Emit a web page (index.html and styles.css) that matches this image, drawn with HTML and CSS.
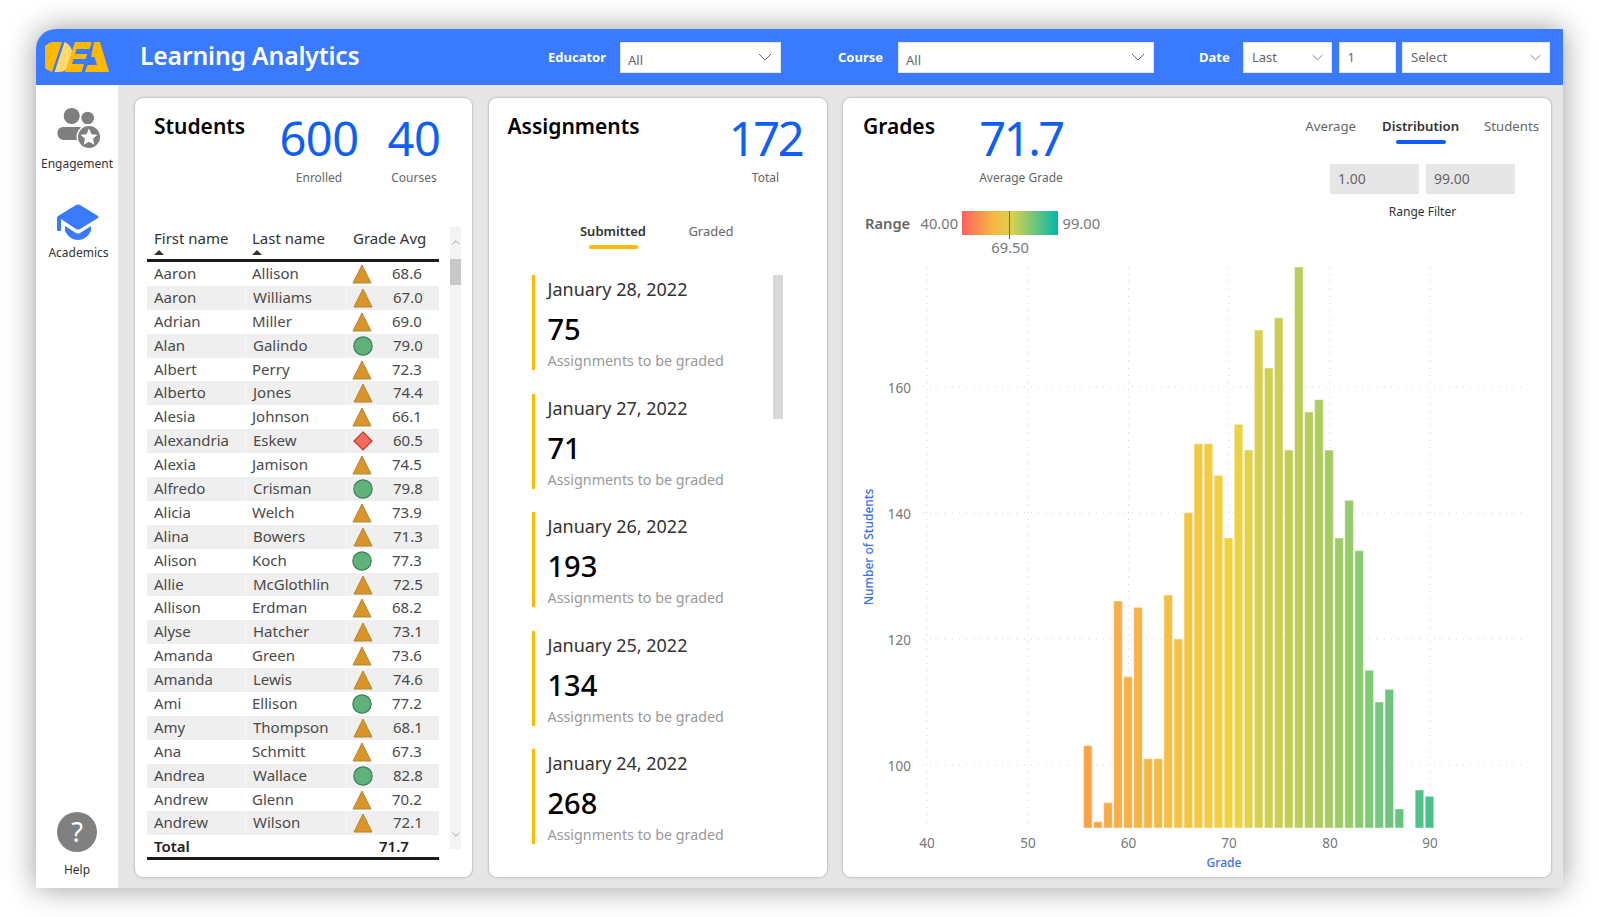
FILE: index.html
```html
<!DOCTYPE html>
<html lang="en">
<head>
    <meta charset="utf-8">
    <title>Learning Analytics</title>
    <link rel="stylesheet" href="styles.css">
</head>
<body>
<svg class="defs">
    <symbol id="tri" viewBox="0 0 20 20"><path d="M10 1 L19 19 H1 Z" fill="#d9952a" stroke="#b5822f" stroke-width="1"/></symbol>
    <symbol id="dot" viewBox="0 0 20 20"><circle cx="10" cy="10" r="9.2" fill="#5fb27a" stroke="#3f7f58" stroke-width="1.2"/></symbol>
    <symbol id="dia" viewBox="0 0 20 20"><path d="M10 1 L19 10 L10 19 L1 10 Z" fill="#f8695c" stroke="#c8352b" stroke-width="1.2"/></symbol>
    <symbol id="chev" viewBox="0 0 14 8"><path d="M1 1 L7 7 L13 1" fill="none" stroke="#666" stroke-width="1"/></symbol>
</svg>

<div class="app">
    <header class="topbar">
        <svg class="logo" viewBox="0 0 64 30">
            <path d="M15 0 H17 L7 30 A15 15 0 0 1 15 0 Z" fill="#ffb900"/>
            <path d="M19.5 0 C25 2 28 8 28 15 C28 23 22 30 14 30 H9.5 Z" fill="#ffd96b"/>
            <path d="M30 0 H47 L44.5 7 H31.5 L30 12 H42 L40.5 17 H28.5 L27 22 H39 L36.5 30 H20 Z" fill="#ffb900"/>
            <path d="M49 0 H55 L64 30 H40 L42.5 23 H52 L49.5 15 L46 15 Z" fill="#ffb900"/>
        </svg>
        <h1 class="app-title">Learning Analytics</h1>
        <div class="filters">
            <span class="f-label f-educator">Educator</span>
            <div class="dd dd-educator"><span>All</span><svg class="chev"><use href="#chev"/></svg></div>
            <span class="f-label f-course">Course</span>
            <div class="dd dd-course"><span>All</span><svg class="chev"><use href="#chev"/></svg></div>
            <span class="f-label f-date">Date</span>
            <div class="dd dd-last"><span>Last</span><svg class="chev small"><use href="#chev"/></svg></div>
            <div class="dd dd-num"><span>1</span></div>
            <div class="dd dd-select"><span>Select</span><svg class="chev small"><use href="#chev"/></svg></div>
        </div>
    </header>

    <div class="body-wrap">
        <nav class="side">
            <a class="side-item engagement">
                <svg class="ico-eng" viewBox="0 0 46 42">
                    <circle cx="17.7" cy="8" r="8" fill="#7f7f7f"/>
                    <circle cx="33.7" cy="10" r="6.3" fill="#7f7f7f"/>
                    <path d="M3.5 25 C3.5 21 6 19 10 19 H24 C28 19 30 21 30 24 V32 H10 C6 32 3.5 29 3.5 25 Z" fill="#7f7f7f"/>
                    <path d="M30 18 H38 L37 19 C33 19 29 22 27 23 Z" fill="#7f7f7f"/>
                    <circle cx="35" cy="29" r="12.5" fill="#fff"/>
                    <circle cx="35" cy="29" r="11" fill="#7f7f7f"/>
                    <path d="M35 20.5 L37.5 26.2 L43.5 26.8 L39 30.8 L40.3 36.8 L35 33.7 L29.7 36.8 L31 30.8 L26.5 26.8 L32.5 26.2 Z" fill="#fff"/>
                </svg>
                <span>Engagement</span>
            </a>
            <a class="side-item academics">
                <svg class="ico-acad" viewBox="0 0 42 37">
                    <path d="M19 1 Q21 0 23 1 L41 12 Q42 13 41 14 L23 25 Q21 26 19 25 L4 15 V27 H1 Q0 27 0 26 V14 Q0 13 1 12 Z" fill="#3a7afe"/>
                    <path d="M8 22 L19 29 Q21 30 23 29 L34 22 V27 C31 33 26 36 21 36 C16 36 11 33 8 27 Z" fill="#3a7afe"/>
                </svg>
                <span>Academics</span>
            </a>
            <a class="side-item help">
                <span class="help-circle">?</span>
                <span>Help</span>
            </a>
        </nav>

        <main class="board">
            <section class="card">
                <div class="card-head">
                    <h2 class="card-title">Students</h2>
                    <div class="kpis">
                        <div class="kpi kpi-600"><div class="kpi-num">600</div><div class="kpi-label">Enrolled</div></div>
                        <div class="kpi kpi-40"><div class="kpi-num">40</div><div class="kpi-label">Courses</div></div>
                    </div>
                </div>
                <div class="table-wrap">
                    <div class="table">
                        <div class="thead">
                            <span class="sorted">First name</span>
                            <span class="sorted">Last name</span>
                            <span>Grade Avg</span>
                        </div>
                        <div class="rows">
                            <div class="row"><span>Aaron</span><span>Allison</span><span class="grade"><svg class="mark"><use href="#tri"/></svg>68.6</span></div>
                            <div class="row"><span>Aaron</span><span>Williams</span><span class="grade"><svg class="mark"><use href="#tri"/></svg>67.0</span></div>
                            <div class="row"><span>Adrian</span><span>Miller</span><span class="grade"><svg class="mark"><use href="#tri"/></svg>69.0</span></div>
                            <div class="row"><span>Alan</span><span>Galindo</span><span class="grade"><svg class="mark"><use href="#dot"/></svg>79.0</span></div>
                            <div class="row"><span>Albert</span><span>Perry</span><span class="grade"><svg class="mark"><use href="#tri"/></svg>72.3</span></div>
                            <div class="row"><span>Alberto</span><span>Jones</span><span class="grade"><svg class="mark"><use href="#tri"/></svg>74.4</span></div>
                            <div class="row"><span>Alesia</span><span>Johnson</span><span class="grade"><svg class="mark"><use href="#tri"/></svg>66.1</span></div>
                            <div class="row"><span>Alexandria</span><span>Eskew</span><span class="grade"><svg class="mark"><use href="#dia"/></svg>60.5</span></div>
                            <div class="row"><span>Alexia</span><span>Jamison</span><span class="grade"><svg class="mark"><use href="#tri"/></svg>74.5</span></div>
                            <div class="row"><span>Alfredo</span><span>Crisman</span><span class="grade"><svg class="mark"><use href="#dot"/></svg>79.8</span></div>
                            <div class="row"><span>Alicia</span><span>Welch</span><span class="grade"><svg class="mark"><use href="#tri"/></svg>73.9</span></div>
                            <div class="row"><span>Alina</span><span>Bowers</span><span class="grade"><svg class="mark"><use href="#tri"/></svg>71.3</span></div>
                            <div class="row"><span>Alison</span><span>Koch</span><span class="grade"><svg class="mark"><use href="#dot"/></svg>77.3</span></div>
                            <div class="row"><span>Allie</span><span>McGlothlin</span><span class="grade"><svg class="mark"><use href="#tri"/></svg>72.5</span></div>
                            <div class="row"><span>Allison</span><span>Erdman</span><span class="grade"><svg class="mark"><use href="#tri"/></svg>68.2</span></div>
                            <div class="row"><span>Alyse</span><span>Hatcher</span><span class="grade"><svg class="mark"><use href="#tri"/></svg>73.1</span></div>
                            <div class="row"><span>Amanda</span><span>Green</span><span class="grade"><svg class="mark"><use href="#tri"/></svg>73.6</span></div>
                            <div class="row"><span>Amanda</span><span>Lewis</span><span class="grade"><svg class="mark"><use href="#tri"/></svg>74.6</span></div>
                            <div class="row"><span>Ami</span><span>Ellison</span><span class="grade"><svg class="mark"><use href="#dot"/></svg>77.2</span></div>
                            <div class="row"><span>Amy</span><span>Thompson</span><span class="grade"><svg class="mark"><use href="#tri"/></svg>68.1</span></div>
                            <div class="row"><span>Ana</span><span>Schmitt</span><span class="grade"><svg class="mark"><use href="#tri"/></svg>67.3</span></div>
                            <div class="row"><span>Andrea</span><span>Wallace</span><span class="grade"><svg class="mark"><use href="#dot"/></svg>82.8</span></div>
                            <div class="row"><span>Andrew</span><span>Glenn</span><span class="grade"><svg class="mark"><use href="#tri"/></svg>70.2</span></div>
                            <div class="row"><span>Andrew</span><span>Wilson</span><span class="grade"><svg class="mark"><use href="#tri"/></svg>72.1</span></div>
                        </div>
                        <div class="tfoot"><span>Total</span><span></span><span class="total-val">71.7</span></div>
                    </div>
                    <div class="scrollbar">
                        <svg class="sb-arrow up"><use href="#chev"/></svg>
                        <div class="sb-thumb"></div>
                        <svg class="sb-arrow down"><use href="#chev"/></svg>
                    </div>
                </div>
            </section>

            <section class="card">
                <div class="card-head">
                    <h2 class="card-title">Assignments</h2>
                    <div class="kpis">
                        <div class="kpi kpi-172"><div class="kpi-num">172</div><div class="kpi-label">Total</div></div>
                    </div>
                </div>
                <div class="tabs-a">
                    <div class="tab-a active">Submitted<i></i></div>
                    <div class="tab-a">Graded</div>
                </div>
                <div class="assign-body">
                    <div class="assign-list">
                        <div class="assign"><div class="a-date">January 28, 2022</div><div class="a-num">75</div><div class="a-text">Assignments to be graded</div></div>
                        <div class="assign"><div class="a-date">January 27, 2022</div><div class="a-num">71</div><div class="a-text">Assignments to be graded</div></div>
                        <div class="assign"><div class="a-date">January 26, 2022</div><div class="a-num">193</div><div class="a-text">Assignments to be graded</div></div>
                        <div class="assign"><div class="a-date">January 25, 2022</div><div class="a-num">134</div><div class="a-text">Assignments to be graded</div></div>
                        <div class="assign"><div class="a-date">January 24, 2022</div><div class="a-num">268</div><div class="a-text">Assignments to be graded</div></div>
                    </div>
                    <div class="assign-thumb"></div>
                </div>
            </section>

            <section class="card">
                <div class="grades-top">
                    <div class="grades-left">
                        <div class="card-head">
                            <h2 class="card-title title-grades">Grades</h2>
                            <div class="kpi kpi-grade"><div class="kpi-num">71.7</div><div class="kpi-label">Average Grade</div></div>
                        </div>
                        <div class="range">
                            <span class="range-label">Range</span>
                            <span class="range-val">40.00</span>
                            <div class="range-bar"><i class="range-mark"></i><span class="range-now">69.50</span></div>
                            <span class="range-val">99.00</span>
                        </div>
                    </div>
                    <div class="grades-right">
                        <div class="tabs-g">
                            <div class="tab-g">Average</div>
                            <div class="tab-g active">Distribution<i></i></div>
                            <div class="tab-g">Students</div>
                        </div>
                        <div class="filter-inputs">
                            <div class="num-input">1.00</div>
                            <div class="num-input">99.00</div>
                        </div>
                        <div class="filter-label">Range Filter</div>
                    </div>
                </div>
                <svg class="chart" viewBox="843 256 708 621">
                    <g class="grid">
                        <path d="M927 267 V828 M1028 267 V828 M1128.5 267 V828 M1229 267 V828 M1330 267 V828 M1430 267 V828"/>
                        <path d="M923 387 H1522 M923 513 H1522 M923 639 H1522 M923 765 H1522"/>
                    </g>
                    <g class="bars">
                        <rect x="1083.5" y="745.7" width="8.6" height="82.3" fill="#fca34a"/>
                        <rect x="1093.55" y="821.7" width="8.6" height="6.3" fill="#fba749"/>
                        <rect x="1103.6" y="802.7" width="8.6" height="25.3" fill="#fbaa48"/>
                        <rect x="1113.65" y="601" width="8.6" height="227" fill="#faad46"/>
                        <rect x="1123.7" y="676.7" width="8.6" height="151.3" fill="#f9b045"/>
                        <rect x="1133.75" y="607.3" width="8.6" height="220.7" fill="#f8b345"/>
                        <rect x="1143.8" y="758.7" width="8.6" height="69.3" fill="#f8b744"/>
                        <rect x="1153.85" y="758.7" width="8.6" height="69.3" fill="#f7ba44"/>
                        <rect x="1163.9" y="595" width="8.6" height="233" fill="#f6be43"/>
                        <rect x="1173.95" y="639" width="8.6" height="189" fill="#f5c243"/>
                        <rect x="1184" y="512.7" width="8.6" height="315.3" fill="#f5c541"/>
                        <rect x="1194.05" y="443.7" width="8.6" height="384.3" fill="#f5c840"/>
                        <rect x="1204.1" y="443.7" width="8.6" height="384.3" fill="#f6cb40"/>
                        <rect x="1214.15" y="475.3" width="8.6" height="352.7" fill="#f5ce3f"/>
                        <rect x="1224.2" y="538" width="8.6" height="290" fill="#f2d13f"/>
                        <rect x="1234.25" y="424.3" width="8.6" height="403.7" fill="#ebd343"/>
                        <rect x="1244.3" y="450" width="8.6" height="378" fill="#e2d249"/>
                        <rect x="1254.35" y="330" width="8.6" height="498" fill="#d8d04f"/>
                        <rect x="1264.4" y="368" width="8.6" height="460" fill="#d1cf50"/>
                        <rect x="1274.45" y="317.7" width="8.6" height="510.3" fill="#cbce52"/>
                        <rect x="1284.5" y="450" width="8.6" height="378" fill="#c3cd55"/>
                        <rect x="1294.55" y="267" width="8.6" height="561" fill="#bccd57"/>
                        <rect x="1304.6" y="412" width="8.6" height="416" fill="#b5cc5b"/>
                        <rect x="1314.65" y="399.7" width="8.6" height="428.3" fill="#aecc5f"/>
                        <rect x="1324.7" y="450" width="8.6" height="378" fill="#a7cb62"/>
                        <rect x="1334.75" y="538" width="8.6" height="290" fill="#9fcb66"/>
                        <rect x="1344.8" y="500.3" width="8.6" height="327.7" fill="#95cb6b"/>
                        <rect x="1354.85" y="550.7" width="8.6" height="277.3" fill="#8acb70"/>
                        <rect x="1364.9" y="670.3" width="8.6" height="157.7" fill="#80c975"/>
                        <rect x="1374.95" y="702" width="8.6" height="126" fill="#77c87a"/>
                        <rect x="1385" y="689.3" width="8.6" height="138.7" fill="#6ec67c"/>
                        <rect x="1395.05" y="809" width="8.6" height="19" fill="#65c47f"/>
                        <rect x="1415.15" y="790" width="8.6" height="38" fill="#4fc386"/>
                        <rect x="1425.2" y="796.3" width="8.6" height="31.7" fill="#49c187"/>
                    </g>
                    <g class="tick y-tick">
                        <text x="911" y="393">160</text>
                        <text x="911" y="519">140</text>
                        <text x="911" y="645">120</text>
                        <text x="911" y="771">100</text>
                    </g>
                    <g class="tick x-tick">
                        <text x="927" y="848">40</text>
                        <text x="1028" y="848">50</text>
                        <text x="1128.5" y="848">60</text>
                        <text x="1229" y="848">70</text>
                        <text x="1330" y="848">80</text>
                        <text x="1430" y="848">90</text>
                    </g>
                    <text class="axis-title" x="1224" y="867">Grade</text>
                    <text class="axis-title" transform="translate(873 547) rotate(-90)">Number of Students</text>
                </svg>
            </section>
        </main>
    </div>
</div>
</body>
</html>
```

FILE: styles.css
```css
* {
    box-sizing: border-box;
}
html, body {
    margin: 0;
    height: 100%;
}
body {
    background: #fff;
    padding: 29px 0 0 36px;
    font-family: "Noto Sans", "Open Sans", sans-serif;
    color: #444;
    overflow: hidden;
}
h1, h2 {
    margin: 0;
}
.defs {
    display: none;
}

.app {
    width: 1527px;
    height: 859px;
    background: #e6e6e6;
    border-top-left-radius: 20px;
    box-shadow: 0 0 30px rgba(0, 0, 0, .4);
    display: flex;
    flex-direction: column;
}

/* top bar */
.topbar {
    height: 56px;
    flex: none;
    background: #3a7afe;
    border-top-left-radius: 20px;
    display: flex;
    align-items: center;
    padding: 0 13px 0 9px;
}
.logo {
    width: 64px;
    height: 30px;
    flex: none;
}
.app-title {
    margin-left: 31px;
    margin-top: -4px;
    color: #fff;
    font-size: 24.7px;
    font-weight: 600;
    letter-spacing: -.15px;
    white-space: nowrap;
}
.filters {
    margin-left: auto;
    display: flex;
    align-items: center;
}
.f-label {
    color: #fff;
    font-size: 13px;
    font-weight: 700;
    white-space: nowrap;
}
.f-educator { width: 72px; }
.f-course { width: 60px; margin-left: 57.5px; }
.f-date { width: 44px; margin-left: 45px; }
.dd {
    height: 31px;
    background: #fff;
    border: 1px solid #e4e4e4;
    display: flex;
    align-items: center;
    justify-content: space-between;
    padding: 0 8px;
    font-size: 13px;
    color: #666;
}
.dd-educator { width: 160.5px; padding-left: 7px; }
.dd-course { width: 256px; padding-left: 7px; }
.dd-educator span, .dd-course span { padding-top: 5px; }
.dd-last { width: 89px; }
.dd-num { width: 57px; margin-left: 6.5px; }
.dd-select { width: 148px; margin-left: 6.5px; }
.chev {
    width: 14px;
    height: 8px;
}
.chev.small {
    width: 11px;
    height: 7px;
}

/* layout under the bar */
.body-wrap {
    flex: 1;
    display: flex;
    min-height: 0;
}
.side {
    width: 82px;
    flex: none;
    background: #fff;
    display: flex;
    flex-direction: column;
    align-items: center;
    font-size: 12px;
    color: #333;
}
.side-item {
    display: flex;
    flex-direction: column;
    align-items: center;
}
.engagement {
    margin-top: 23px;
}
.ico-eng {
    width: 46px;
    height: 42px;
    margin-bottom: 5px;
    overflow: visible;
}
.academics {
    margin-top: 32px;
    margin-left: 3px;
}
.ico-acad {
    width: 42px;
    height: 37px;
    margin-bottom: 3px;
}
.help {
    margin-top: auto;
    margin-bottom: 10px;
}
.help-circle {
    width: 40px;
    height: 40px;
    border-radius: 50%;
    background: #808080;
    color: #fff;
    font-size: 27px;
    line-height: 40px;
    text-align: center;
    margin-bottom: 9px;
}

.board {
    flex: 1;
    display: grid;
    grid-template-columns: 337px 338px 708px;
    column-gap: 16.5px;
    padding: 13px 0 11px 17px;
}
.card {
    background: #fff;
    border-radius: 8px;
    box-shadow: 0 0 2px 1px rgba(0, 0, 0, .16);
    min-width: 0;
}

.card-head {
    display: flex;
    align-items: flex-start;
    padding-top: 14px;
}
.card-title {
    padding-left: 19px;
    color: #000;
    font-size: 21px;
    font-weight: 600;
    line-height: 28px;
    white-space: nowrap;
}
.kpis {
    margin-left: auto;
    display: flex;
    margin-top: 2px;
}
.kpi {
    text-align: center;
}
.kpi-num {
    color: #0f5ef7;
    font-size: 47px;
    line-height: 48px;
    letter-spacing: -.5px;
}
.kpi-label {
    margin-top: 7px;
    font-size: 12px;
    line-height: 18px;
    color: #666;
}
.kpi-600 { width: 90px; margin-right: 20px; }
.kpi-40 { width: 60px; margin-right: 28px; }
.kpi-172 { width: 80px; margin-right: 21px; }
.kpi-172 .kpi-num, .kpi-grade .kpi-num {
    letter-spacing: -2.4px;
}

/* students table */
.table-wrap {
    display: flex;
    margin: 40px 0 0 12px;
}
.table {
    width: 292px;
    font-size: 15px;
    color: #4a4a4a;
}
.thead, .row, .tfoot {
    display: grid;
    grid-template-columns: 98px 101px 93px;
    align-items: center;
}
.thead {
    height: 35px;
    border-bottom: 3px solid #1a1a1a;
    align-items: start;
    padding-top: 1px;
    color: #333;
    line-height: 20px;
}
.thead span {
    padding-left: 7px;
    position: relative;
}
.sorted::after {
    content: "";
    position: absolute;
    left: 7px;
    top: 22px;
    border-left: 5px solid transparent;
    border-right: 5px solid transparent;
    border-bottom: 5px solid #333;
}
.row {
    height: 23.9px;
}
.row span {
    height: 100%;
    padding-left: 7px;
    line-height: 23.9px;
}
.rows .row:nth-child(even) {
    background: #efefef;
}
.rows .row:nth-child(even) span + span {
    border-left: 1px solid #f6f6f6;
}
.row .grade {
    display: flex;
    align-items: center;
    padding-left: 6px;
}
.mark {
    width: 20px;
    height: 20px;
    margin-right: 20px;
    flex: none;
}
.tfoot {
    height: 25px;
    border-bottom: 3px solid #1a1a1a;
    color: #222;
    font-weight: 600;
    line-height: 22px;
}
.tfoot span {
    padding-left: 7px;
}
.tfoot .total-val {
    padding-left: 33px;
}
.scrollbar {
    width: 11px;
    height: 622px;
    margin-left: 11px;
    background: #f3f3f3;
    display: flex;
    flex-direction: column;
    align-items: center;
}
.sb-arrow {
    width: 8px;
    height: 5px;
    flex: none;
}
.sb-arrow.up {
    margin-top: 13px;
    transform: rotate(180deg);
}
.sb-thumb {
    width: 11px;
    height: 26px;
    margin-top: 14px;
    background: #c8c8c8;
}
.sb-arrow.down {
    margin-top: auto;
    margin-bottom: 12px;
}

/* assignments */
.tabs-a {
    display: flex;
    margin: 34px 0 0 75.5px;
    font-size: 13px;
    line-height: 20px;
    color: #666;
}
.tab-a {
    width: 98px;
    text-align: center;
}
.tab-a.active {
    color: #333;
    font-weight: 600;
}
.tab-a i {
    display: block;
    width: 49px;
    height: 4px;
    margin: 4px auto 0;
    background: #ffb900;
    border-radius: 2px;
}
.assign-body {
    display: flex;
    align-items: flex-start;
    margin-top: 26px;
    padding-left: 43.5px;
}
.assign-list {
    width: 241px;
}
.assign {
    height: 95px;
    margin-bottom: 23.5px;
    border-left: 3.5px solid #ffb900;
    padding-left: 12.5px;
}
.a-date {
    font-size: 18px;
    line-height: 28px;
    color: #333;
}
.a-num {
    margin-top: 8px;
    font-size: 29px;
    font-weight: 500;
    line-height: 36px;
    color: #000;
}
.a-text {
    margin-top: 4px;
    font-size: 14.3px;
    line-height: 20px;
    color: #999;
    white-space: nowrap;
}
.assign-thumb {
    width: 10px;
    height: 144px;
    background: #d8d8d8;
}

/* grades */
.grades-top {
    height: 158px;
    display: flex;
}
.grades-left {
    width: 420px;
}
.title-grades {
    width: 119px;
    padding-left: 20px;
}
.kpi-grade {
    width: 118px;
    margin-top: 2px;
}
.range {
    display: flex;
    align-items: center;
    margin-top: 24px;
    padding-left: 22px;
    font-size: 14.7px;
    color: #777;
}
.range-label {
    width: 55.5px;
    font-weight: 600;
    color: #666;
}
.range-val {
    line-height: 24px;
}
.range-bar {
    position: relative;
    width: 96px;
    height: 24px;
    margin: 0 4.5px 0 4px;
    background: linear-gradient(to right, #fd625e, #f5b942 33%, #d9d24e 52%, #01b8aa);
}
.range-mark {
    position: absolute;
    left: 47px;
    top: 0;
    width: 1px;
    height: 28px;
    background: #666;
}
.range-now {
    position: absolute;
    left: 0;
    right: 0;
    top: 24px;
    text-align: center;
    line-height: 24px;
}
.grades-right {
    flex: 1;
    min-width: 0;
    padding-left: 20px;
}
.tabs-g {
    display: flex;
    justify-content: flex-end;
    padding: 18px 12px 0 0;
    font-size: 13.2px;
    line-height: 20px;
    color: #666;
}
.tab-g {
    position: relative;
    margin-left: 25px;
}
.tab-g.active {
    color: #333;
    font-weight: 600;
    margin-left: 26px;
}
.tab-g i {
    position: absolute;
    left: 50%;
    top: 24px;
    width: 50px;
    height: 4px;
    margin-left: -25px;
    background: #0f5ef7;
    border-radius: 2px;
}
.filter-inputs {
    display: flex;
    gap: 7px;
    margin: 28px 0 0 47px;
}
.num-input {
    width: 89px;
    height: 30px;
    padding-left: 8px;
    background: #e6e6e6;
    color: #666;
    font-size: 14px;
    line-height: 30px;
}
.filter-label {
    margin: 9px 0 0 47px;
    width: 185px;
    text-align: center;
    font-size: 12px;
    line-height: 18px;
    color: #333;
}
.chart {
    display: block;
    width: 708px;
    height: 621px;
}
.grid path {
    fill: none;
    stroke: #cfcfcf;
    stroke-width: 1;
    stroke-dasharray: 1 6.2;
}
.bars rect {
    stroke: rgba(255, 255, 255, .45);
    stroke-width: 1;
}
.tick text {
    font-size: 13.5px;
    fill: #777;
}
.y-tick text {
    text-anchor: end;
}
.x-tick text {
    text-anchor: middle;
}
.axis-title {
    font-size: 12px;
    font-weight: 500;
    fill: #3a6ff7;
    text-anchor: middle;
}
```
